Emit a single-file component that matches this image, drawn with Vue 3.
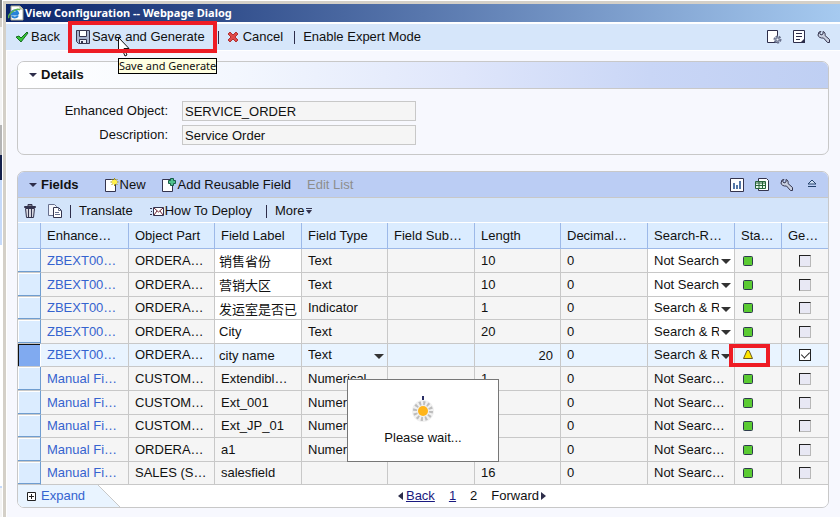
<template>
  <div class="screen">
    <div class="behind"></div>
    <div class="window">
      <header class="titlebar">
        <svg class="ie" viewBox="0 0 16 16" width="16" height="16">
          <path d="M3 1h9l3 3v11H3z" fill="#fff" stroke="#a8a890" />
          <path d="M12 1v3h3" fill="#dde7c8" stroke="#a8a890" />
          <path d="M10.500 9.500H3.500a3.300 3.300 0 1 1 6.500-1.500H4" fill="none" stroke="#2783d8" stroke-width="2" />
          <path d="M10 11c-2 2-5 2-6 0" fill="none" stroke="#2783d8" stroke-width="2" />
          <path d="M1 13C-1 10 8 2 12 5" fill="none" stroke="#5eb44a" stroke-width="1.500" />
        </svg>
        <span class="title">View Configuration -- Webpage Dialog</span>
      </header>

      <nav class="toolbar">
        <button class="btn back">
          <svg viewBox="0 0 14 12" width="14" height="12">
            <path d="M1 6l3-1 2 2 6-6 1 1-7 9z" fill="#35c635" stroke="#176b25" />
          </svg>
          Back
        </button>
        <button class="btn save" @mouseenter="tip = true">
          <svg viewBox="0 0 14 14" width="14" height="14">
            <path d="M.5.5h13v13h-11l-2-2z" fill="#a9b4ce" stroke="#34344e" />
            <path d="M3.500.5h7v6h-7z" fill="#fff" stroke="#34344e" />
            <path d="M3.500 9.500h7v4h-7z" fill="#e8ecf6" stroke="#34344e" />
            <path d="M5 11h2v2H5z" fill="#34344e" />
          </svg>
          Save and Generate
          <svg class="cursor" viewBox="0 0 12 20" width="12" height="20">
            <path d="M.5.5v15l3.500-3.500 3 7 2-1-3-6.500h5z" fill="#fff" stroke="#111" />
          </svg>
          <span v-if="tip" class="tooltip">Save and Generate</span>
        </button>
        <span class="sep"></span>
        <button class="btn cancel">
          <svg viewBox="0 0 12 12" width="12" height="12">
            <path d="M1 3l2-2 3 3 3-3 2 2-3 3 3 3-2 2-3-3-3 3-2-2 3-3z" fill="#e04a48" stroke="#b03434" />
          </svg>
          Cancel
        </button>
        <span class="sep"></span>
        <button class="btn expert">Enable Expert Mode</button>
        <div class="tools">
          <button class="icon" aria-label="Page settings">
            <svg viewBox="0 0 16 16" width="16" height="16">
              <path d="M1.500 1.500h10v12h-10z" fill="#fff" stroke="#2d2d4a" />
              <circle cx="11.500" cy="10.500" r="3" fill="#b9c2d6" stroke="#68718c" stroke-width="2" stroke-dasharray="2 1" />
              <circle cx="11.500" cy="10.500" r="1.500" fill="#eef2fa" stroke="#68718c" />
            </svg>
          </button>
          <button class="icon" aria-label="Notes">
            <svg viewBox="0 0 16 16" width="16" height="16">
              <path d="M2.500 1.500h11v12h-11z" fill="#fff" stroke="#2d2d4a" />
              <path d="M5 4.500h6M5 7.500h6M5 10.500h4" stroke="#2d2d4a" />
              <path d="M14 9v5H9z" fill="#2d2d4a" />
            </svg>
          </button>
          <button class="icon" aria-label="Personalize">
            <svg viewBox="0 0 16 16" width="16" height="16">
              <path :d="wrench" fill="#c9d0e0" stroke="#34344e" />
            </svg>
          </button>
        </div>
      </nav>

      <main class="content">
        <section class="panel details">
          <h2 class="panel-head"><i class="caret"></i>Details</h2>
          <div class="form">
            <label for="obj">Enhanced Object:</label>
            <input id="obj" value="SERVICE_ORDER" readonly />
            <label for="desc">Description:</label>
            <input id="desc" value="Service Order" readonly />
          </div>
        </section>

        <section class="panel fields">
          <div class="panel-head">
            <h2><i class="caret"></i>Fields</h2>
            <button class="btn new">
              <svg viewBox="0 0 14 14" width="14" height="14">
                <path d="M.5 1.500h10v12H.5z" fill="#fff" stroke="#34344e" />
                <path d="M9.500 0v8M5.500 4h8M6.500 1l6 6M12.500 1l-6 6" stroke="#a59512" />
                <circle cx="9.500" cy="4" r="2.500" fill="#fff04a" />
              </svg>
              New
            </button>
            <button class="btn add">
              <svg viewBox="0 0 14 14" width="14" height="14">
                <path d="M.5 1.500h10v12H.5z" fill="#fff" stroke="#34344e" />
                <path d="M8.500.5h3v2h2v3h-2v2h-3v-2h-2v-3h2z" fill="#4fc08c" stroke="#185c48" />
              </svg>
              Add Reusable Field
            </button>
            <button class="btn edit" disabled>Edit List</button>
            <div class="tools">
              <button class="icon" aria-label="Chart">
                <svg viewBox="0 0 16 16" width="16" height="16">
                  <path d="M1.500 1.500h13v13h-13z" fill="#fff" stroke="#34344e" />
                  <path d="M5 6v6M8 8v4M11 4v8" stroke="#5477a8" stroke-width="2" />
                </svg>
              </button>
              <button class="icon" aria-label="Export">
                <svg viewBox="0 0 16 16" width="16" height="16">
                  <path d="M4.500 1.500h8l2 2v10h-10z" fill="#fff" stroke="#34344e" />
                  <path d="M1.500 4.500h10v7h-10z" fill="#e6f7e8" stroke="#276339" />
                  <path d="M2 6h9M2 8.500h9M5 5v6M8.500 5v6" stroke="#276339" />
                </svg>
              </button>
              <button class="icon" aria-label="Personalize table">
                <svg viewBox="0 0 16 16" width="16" height="16">
                  <path :d="wrench" fill="#c9d0e0" stroke="#34344e" />
                </svg>
              </button>
              <button class="icon" aria-label="Collapse">
                <svg viewBox="0 0 16 16" width="16" height="16">
                  <path d="M8 3l4 4H4z" fill="#cfe0f4" stroke="#24426c" />
                  <path d="M4 9.500h8" stroke="#24426c" />
                </svg>
              </button>
            </div>
          </div>

          <div class="table-tools">
            <button class="icon" aria-label="Delete">
              <svg viewBox="0 0 12 14" width="12" height="14">
                <path d="M4 2V.5h4V2M.5 2.500h11v1H.5z" fill="#8a8a96" stroke="#34344e" />
                <path d="M1.500 4.500h9l-1 9h-7z" fill="#d8d8e0" stroke="#34344e" />
                <path d="M4.500 5v8M7.500 5v8" stroke="#34344e" />
              </svg>
            </button>
            <button class="icon" aria-label="Copy">
              <svg viewBox="0 0 14 14" width="14" height="14">
                <path d="M.5.5h6l2 2v9h-8z" fill="#f4f6fc" stroke="#68708e" />
                <path d="M5.500 3.500h5l3 3v7h-8z" fill="#fff" stroke="#34344e" />
                <path d="M10.500 3.500v3h3M7 8.500h4M7 10.500h5" fill="none" stroke="#68708e" />
              </svg>
            </button>
            <span class="sep"></span>
            <button class="btn">Translate</button>
            <button class="btn deploy">
              <svg viewBox="0 0 14 9" width="14" height="9">
                <path d="M0 1.500h2M1 4.500h1M0 7.500h2" stroke="#34344e" />
                <path d="M3.500.5h10v8h-10z" fill="#fff" stroke="#34344e" />
                <path d="M4 1l4.500 4L13 1M4 8l3-4M13 8l-3-4" fill="none" stroke="#6b2534" />
              </svg>
              How To Deploy
            </button>
            <span class="sep"></span>
            <button class="btn more">
              More
              <svg viewBox="0 0 6 6" width="6" height="6">
                <path d="M0 .5h6" stroke="#34344e" />
                <path d="M0 2h6L3 6z" fill="#34344e" />
              </svg>
            </button>
          </div>

          <table>
            <colgroup>
              <col v-for="c in columns" :key="c.key" :class="'c-' + c.key" />
            </colgroup>
            <thead>
              <tr>
                <th v-for="c in columns" :key="c.key">{{ c.label }}</th>
              </tr>
            </thead>
            <tbody>
              <tr v-for="(row, i) in rows" :key="i" :class="{ selected: row.selected }">
                <td class="pick"></td>
                <td><a href="#">{{ row.enh }}</a></td>
                <td>{{ row.part }}</td>
                <td v-if="row.edit" class="edit-cell">
                  <input v-model="row.label" aria-label="Field Label" />
                </td>
                <td v-else>{{ row.label }}</td>
                <td v-if="row.selected" class="drop">
                  <select v-model="row.type" aria-label="Field Type">
                    <option>Text</option>
                    <option>Indicator</option>
                    <option>Numerical</option>
                  </select>
                  <i class="arrow"></i>
                </td>
                <td v-else>{{ row.type }}</td>
                <td></td>
                <td v-if="row.selected" class="edit-cell num">
                  <input v-model="row.len" aria-label="Length" />
                </td>
                <td v-else>{{ row.len }}</td>
                <td>0</td>
                <td v-if="row.edit" class="drop search">
                  <select v-model="row.search" aria-label="Search-Relevance">
                    <option>Not Searchable</option>
                    <option>Search &amp; Result</option>
                  </select>
                  <i class="arrow"></i>
                </td>
                <td v-else>{{ row.search }}</td>
                <td class="status">
                  <svg v-if="row.selected" viewBox="0 0 10 10" width="10" height="10">
                    <path d="M4 .5h2l3.500 8H.5z" fill="#ffe600" stroke="#6a5a20" />
                  </svg>
                  <svg v-else viewBox="0 0 10 10" width="10" height="10">
                    <rect x=".5" y=".5" width="9" height="9" rx="1" fill="#5bcb33" stroke="#2e3a4e" />
                  </svg>
                </td>
                <td class="gen">
                  <input type="checkbox" :checked="row.selected" :disabled="!row.selected" aria-label="Generated" />
                </td>
              </tr>
            </tbody>
          </table>

          <footer class="foot">
            <div class="expand">
              <svg class="tab" viewBox="0 0 102 22" width="102" height="22">
                <path d="M0 0h80l22 22H0z" fill="#e9f4ff" />
                <path d="M80 0l22 22" stroke="#c8c8c8" />
              </svg>
              <a href="#">
                <svg viewBox="0 0 9 9" width="9" height="9">
                  <path d="M.5.5h8v8h-8z" fill="#fff" stroke="#222" />
                  <path d="M2 4.500h5M4.500 2v5" stroke="#222" />
                </svg>
                Expand
              </a>
            </div>
            <div class="pager">
              <svg viewBox="0 0 5 8" width="5" height="8"><path d="M5 0v8L0 4z" fill="#2d2d4a" /></svg>
              <a href="#" class="prev">Back</a>
              <a href="#">1</a>
              <span>2</span>
              <span class="next">Forward</span>
              <svg viewBox="0 0 5 8" width="5" height="8"><path d="M0 0v8l5-4z" fill="#2d2d4a" /></svg>
            </div>
          </footer>

          <div class="wait" role="status">
            <svg viewBox="0 0 22 26" width="22" height="26">
              <circle cx="11" cy="15" r="11" fill="#f1f1f1" />
              <circle cx="11" cy="15" r="8" fill="none" stroke="#bdbdbd" stroke-width="4" stroke-dasharray="2 2.189" />
              <circle cx="11" cy="15" r="5" fill="#ffb51a" />
              <path d="M10 0h2v4h-2z" fill="#2b2f66" />
            </svg>
            <span>Please wait...</span>
          </div>
        </section>
      </main>
    </div>
  </div>
</template>

<script setup>
import { ref } from 'vue'

const tip = ref(true)

// shared wrench glyph
const wrench = 'M5 2.500L3.500 4 5 6l2-1V2.500C9 3 9.500 5 9 6.500l4.500 4v3h-2l-4-4.500C5 9.500 2 8 2 6l1-3z'

const columns = [
  { key: 'pick', label: '' },
  { key: 'enh', label: 'Enhance…' },
  { key: 'part', label: 'Object Part' },
  { key: 'label', label: 'Field Label' },
  { key: 'type', label: 'Field Type' },
  { key: 'sub', label: 'Field Sub…' },
  { key: 'len', label: 'Length' },
  { key: 'dec', label: 'Decimal…' },
  { key: 'search', label: 'Search-R…' },
  { key: 'status', label: 'Sta…' },
  { key: 'gen', label: 'Ge…' }
]

const ext = { enh: 'ZBEXT00…', part: 'ORDERA…', edit: true }
const manual = { enh: 'Manual Fi…', search: 'Not Searc…' }

const rows = ref([
  { ...ext, label: '销售省份', type: 'Text', len: '10', search: 'Not Searchable' },
  { ...ext, label: '营销大区', type: 'Text', len: '10', search: 'Not Searchable' },
  { ...ext, label: '发运室是否已', type: 'Indicator', len: '1', search: 'Search & Result' },
  { ...ext, label: 'City', type: 'Text', len: '20', search: 'Search & Result' },
  { ...ext, label: 'city name', type: 'Text', len: '20', search: 'Search & Result', selected: true },
  { ...manual, part: 'CUSTOM…', label: 'Extendibl…', type: 'Numerical', len: '1' },
  { ...manual, part: 'CUSTOM…', label: 'Ext_001', type: 'Numerical', len: '' },
  { ...manual, part: 'CUSTOM…', label: 'Ext_JP_01', type: 'Numerical', len: '' },
  { ...manual, part: 'ORDERA…', label: 'a1', type: 'Numerical', len: '' },
  { ...manual, part: 'SALES (S…', label: 'salesfield', type: '', len: '16' }
])
</script>

<style>
html,
body,
#app {
  height: 100%;
}

body {
  margin: 0;
  overflow: hidden;
}
</style>

<style scoped>
.screen {
  display: flex;
  min-height: 100%;
  font: 13px/16px "Liberation Sans", Arial, "Noto Sans CJK SC", sans-serif;
  color: #111;
}

.screen * {
  box-sizing: border-box;
}

svg {
  display: block;
  flex: none;
}

.behind {
  width: 2px;
  background: linear-gradient(#808080 0 18px, #d4d0c8 18px 27px, #f4f4f4 27px 125px, #b4b4b4 125px 155px, #14204a 155px 180px, #c6dafa 180px 245px, #fff 245px 486px, #c6dafa 486px 488px, #f4f4f4 488px);
}

.window {
  flex: 1;
  min-width: 0;
  border: solid #d4d0c8;
  border-width: 2px 0 0 2px;
  box-shadow: inset 1px 1px #fff;
  outline: 1px solid #d4d0c8;
  margin: 2px 0 0 2px;
  background: #f7f8fe;
}

.titlebar {
  display: flex;
  align-items: center;
  gap: 1px;
  height: 18px;
  padding-left: 2px;
  background: linear-gradient(90deg, #0a246a, #a6caf0);
}

.title {
  color: #fff;
  font: bold 11px/16px "Noto Sans", sans-serif;
}

.btn,
.icon {
  display: flex;
  align-items: center;
  padding: 0;
  border: 0;
  background: none;
  font: inherit;
  color: inherit;
  white-space: nowrap;
}

.icon {
  justify-content: center;
}

.toolbar {
  display: flex;
  align-items: center;
  height: 29px;
  padding: 0 8px 0 9px;
  border: solid #fff;
  border-width: 2px 0 1px;
  background: #d6e6fa;
}

.back {
  gap: 2px;
  margin-right: 8px;
}

.save {
  position: relative;
  gap: 2px;
  height: 32px;
  margin-right: 1px;
  padding: 0 12px 0 8px;
}

.save::after {
  content: "";
  position: absolute;
  inset: 0;
  border: 4px solid #ee1c25;
}

.cursor {
  position: absolute;
  left: 50px;
  top: 16px;
}

.tooltip {
  position: absolute;
  z-index: 2;
  left: 50px;
  top: 37px;
  border: 1px solid #000;
  background: #ffffe1;
  font: 11px/14px "Noto Sans", sans-serif;
}

.sep {
  width: 1px;
  height: 13px;
  background: #2d2d4a;
}

.cancel {
  gap: 4px;
  margin: 0 11px 0 8px;
}

.expert {
  margin-left: 8px;
}

.tools {
  display: flex;
  gap: 9px;
  margin-left: auto;
}

.content {
  display: flex;
  flex-direction: column;
  gap: 16px;
  padding: 10px 11px;
}

.panel {
  position: relative;
  border: 1px solid #c8c8c8;
  border-radius: 7px;
}

h2 {
  display: flex;
  align-items: center;
  gap: 4px;
  margin: 0;
  font-size: 13px;
}

.caret {
  border: solid transparent;
  border-width: 4px 4px 0;
  border-top-color: #2d2d4a;
}

.panel-head {
  display: flex;
  align-items: center;
  height: 27px;
  padding: 0 8px 0 11px;
  border-bottom: 1px solid #c8c8c8;
  border-radius: 6px 6px 0 0;
}

.details .panel-head {
  background: linear-gradient(90deg, #fff, #f3f7fe 27%, #dfe6fb 55%, #c9d6f6 78%, #bfcff3);
}

.form {
  display: grid;
  grid-template-columns: 150px 234px;
  gap: 4px 14px;
  padding: 12px 0 9px;
}

.form label {
  text-align: right;
  line-height: 20px;
}

.form input {
  width: 100%;
  height: 20px;
  padding: 0 2px;
  border: 1px solid #c8c8c8;
  background: #f5f5f5;
  font: inherit;
  color: inherit;
}

.fields .panel-head {
  height: 26px;
  background: #bbcdf4;
}

.new {
  gap: 1px;
  margin-left: 26px;
}

.add {
  gap: 2px;
  margin-left: 16px;
}

.edit {
  margin-left: 16px;
  color: #8d8d8d;
}

.table-tools {
  display: flex;
  align-items: center;
  height: 25px;
  gap: 8px;
  padding: 2px 6px 0;
  border-bottom: 1px solid #fff;
  background: #d3e4fa;
}

.table-tools .icon + .icon {
  margin-left: 4px;
}

.deploy {
  gap: 1px;
  margin: 0 6px 0 9px;
}

.more {
  gap: 1px;
}

table {
  width: 100%;
  table-layout: fixed;
  border-collapse: separate;
  border-spacing: 0;
}

.c-pick { width: 23px; }
.c-enh { width: 88px; }
.c-part { width: 86px; }
.c-label { width: 87px; }
.c-type { width: 86px; }
.c-sub { width: 87px; }
.c-len { width: 86px; }
.c-dec { width: 87px; }
.c-search { width: 87px; }
.c-status { width: 47px; }
.c-gen { width: 46px; }

th,
td {
  height: 24px;
  padding: 0 0 0 6px;
  border: solid #c8c8c8;
  border-width: 0 1px 1px 0;
  background: #f5f5f5;
  text-align: left;
  font-weight: normal;
  line-height: 16px;
  white-space: nowrap;
  overflow: hidden;
}

th {
  height: 26px;
  border-color: #9db9e8;
  background: #dbecff;
}

tr > :last-child {
  border-right: 0;
}

tbody tr:nth-child(5n + 3) td,
tbody tr:nth-child(5n) td {
  height: 23px;
}

td.pick {
  border-right-color: #6f9dd0;
  background: #dbecff;
  box-shadow: inset 0 -1px #6f9dd0, inset 1px 1px #fff;
}

td.edit-cell,
td.drop {
  background: #fff;
}

.selected td,
.selected td.edit-cell,
.selected td.drop {
  background: #e9f4ff;
}

.selected td.pick {
  background: #80aaf0;
  border-right-color: #fff;
  box-shadow: inset 1px 1px #111;
}

a {
  color: #3563cf;
  text-decoration: none;
}

td input,
td select {
  display: block;
  width: 100%;
  height: 20px;
  margin: 0;
  padding: 0;
  border: 0;
  background: none;
  font: inherit;
  color: inherit;
}

td select {
  appearance: none;
  text-overflow: clip;
}

.edit-cell {
  padding: 0 4px;
}

.num input {
  padding-right: 3px;
  text-align: right;
}

.drop {
  position: relative;
}

.search select {
  width: 65px;
}

.arrow {
  position: absolute;
  right: 3px;
  top: 10px;
  border: solid transparent;
  border-width: 5px 5px 0;
  border-top-color: #333;
}

.status {
  padding-left: 8px;
}

.selected td.status {
  position: relative;
  overflow: visible;
}

.selected .status::after {
  content: "";
  position: absolute;
  inset: 0 11px -1px -6px;
  border: 4px solid #ee1c25;
}

td.gen {
  padding: 0;
}

.gen input {
  appearance: none;
  position: relative;
  width: 12px;
  height: 12px;
  margin: 0 auto;
  border: 1px solid #b8b8b8;
  border-top-color: #222;
  border-left-color: #222;
  background: #e8e8f4;
}

.gen input:checked {
  border-color: #222;
  background: #fff;
}

.gen input:checked::before {
  content: "";
  position: absolute;
  left: 3px;
  top: 0;
  width: 4px;
  height: 7px;
  border: solid #222;
  border-width: 0 1px 1px 0;
  transform: rotate(45deg);
}

.foot {
  display: flex;
  height: 22px;
  border-radius: 0 0 6px 6px;
  background: #fff;
  overflow: hidden;
}

.expand {
  position: relative;
  width: 102px;
}

.expand .tab {
  position: absolute;
}

.expand a {
  position: relative;
  display: flex;
  align-items: center;
  gap: 5px;
  height: 22px;
  padding-left: 9px;
}

.pager {
  display: flex;
  align-items: center;
  gap: 14px;
  margin: 0 auto;
  padding-right: 4px;
}

.pager a {
  color: #1a1a80;
  text-decoration: underline;
}

.pager .prev {
  margin-left: -11px;
}

.pager .next {
  margin-right: -12px;
}

.wait {
  position: absolute;
  top: 207px;
  left: 50%;
  display: flex;
  flex-direction: column;
  align-items: center;
  gap: 8px;
  width: 152px;
  padding: 16px 0 15px;
  border: 1px solid #777;
  background: #fff;
  transform: translateX(-50%);
}
</style>
